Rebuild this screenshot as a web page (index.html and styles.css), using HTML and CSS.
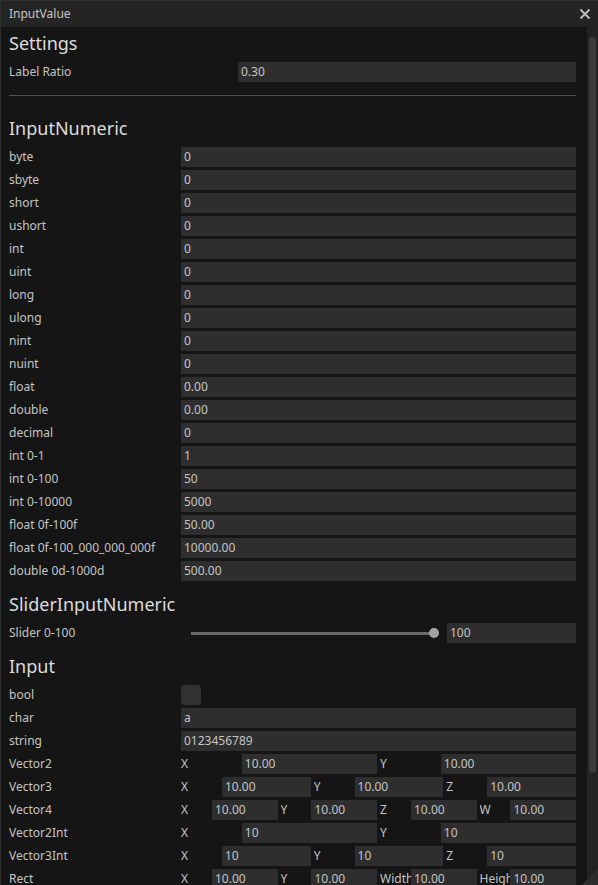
FILE: index.html
```html
<!DOCTYPE html>
<html>
<head>
<meta charset="utf-8">
<title>InputValue</title>
<link rel="stylesheet" href="styles.css">
</head>
<body>
<div class="window">
  <div class="titlebar">
    <span class="title">InputValue</span>
    <svg class="close" viewBox="0 0 12 12" width="12" height="12"><path d="M1.5 1.5 L10.5 10.5 M10.5 1.5 L1.5 10.5" stroke="#b8b8b8" stroke-width="2" fill="none"/></svg>
  </div>
  <div class="main">
    <div class="content">
      <div class="header">Settings</div>
      <div class="row"><div class="label wide">Label Ratio</div><div class="field">0.30</div></div>
      <div class="separator"></div>

      <div class="header">InputNumeric</div>
      <div class="row"><div class="label">byte</div><div class="field">0</div></div>
      <div class="row"><div class="label">sbyte</div><div class="field">0</div></div>
      <div class="row"><div class="label">short</div><div class="field">0</div></div>
      <div class="row"><div class="label">ushort</div><div class="field">0</div></div>
      <div class="row"><div class="label">int</div><div class="field">0</div></div>
      <div class="row"><div class="label">uint</div><div class="field">0</div></div>
      <div class="row"><div class="label">long</div><div class="field">0</div></div>
      <div class="row"><div class="label">ulong</div><div class="field">0</div></div>
      <div class="row"><div class="label">nint</div><div class="field">0</div></div>
      <div class="row"><div class="label">nuint</div><div class="field">0</div></div>
      <div class="row"><div class="label">float</div><div class="field">0.00</div></div>
      <div class="row"><div class="label">double</div><div class="field">0.00</div></div>
      <div class="row"><div class="label">decimal</div><div class="field">0</div></div>
      <div class="row"><div class="label">int 0-1</div><div class="field">1</div></div>
      <div class="row"><div class="label">int 0-100</div><div class="field">50</div></div>
      <div class="row"><div class="label">int 0-10000</div><div class="field">5000</div></div>
      <div class="row"><div class="label">float 0f-100f</div><div class="field">50.00</div></div>
      <div class="row"><div class="label">float 0f-100_000_000_000f</div><div class="field">10000.00</div></div>
      <div class="row"><div class="label">double 0d-1000d</div><div class="field">500.00</div></div>

      <div class="header">SliderInputNumeric</div>
      <div class="row">
        <div class="label">Slider 0-100</div>
        <div class="slider"><div class="track"></div><div class="knob"></div></div>
        <div class="field slider-field">100</div>
      </div>

      <div class="header">Input</div>
      <div class="row"><div class="label">bool</div><div class="checkbox"></div></div>
      <div class="row"><div class="label">char</div><div class="field">a</div></div>
      <div class="row"><div class="label">string</div><div class="field">0123456789</div></div>
      <div class="row"><div class="label">Vector2</div>
        <div class="comps">
          <div class="comp"><div class="clabel">X</div><div class="field">10.00</div></div>
          <div class="comp"><div class="clabel">Y</div><div class="field">10.00</div></div>
        </div>
      </div>
      <div class="row"><div class="label">Vector3</div>
        <div class="comps">
          <div class="comp"><div class="clabel">X</div><div class="field">10.00</div></div>
          <div class="comp"><div class="clabel">Y</div><div class="field">10.00</div></div>
          <div class="comp"><div class="clabel">Z</div><div class="field">10.00</div></div>
        </div>
      </div>
      <div class="row"><div class="label">Vector4</div>
        <div class="comps">
          <div class="comp"><div class="clabel">X</div><div class="field">10.00</div></div>
          <div class="comp"><div class="clabel">Y</div><div class="field">10.00</div></div>
          <div class="comp"><div class="clabel">Z</div><div class="field">10.00</div></div>
          <div class="comp"><div class="clabel">W</div><div class="field">10.00</div></div>
        </div>
      </div>
      <div class="row"><div class="label">Vector2Int</div>
        <div class="comps">
          <div class="comp"><div class="clabel">X</div><div class="field">10</div></div>
          <div class="comp"><div class="clabel">Y</div><div class="field">10</div></div>
        </div>
      </div>
      <div class="row"><div class="label">Vector3Int</div>
        <div class="comps">
          <div class="comp"><div class="clabel">X</div><div class="field">10</div></div>
          <div class="comp"><div class="clabel">Y</div><div class="field">10</div></div>
          <div class="comp"><div class="clabel">Z</div><div class="field">10</div></div>
        </div>
      </div>
      <div class="row"><div class="label">Rect</div>
        <div class="comps">
          <div class="comp"><div class="clabel">X</div><div class="field">10.00</div></div>
          <div class="comp"><div class="clabel">Y</div><div class="field">10.00</div></div>
          <div class="comp"><div class="clabel">Width</div><div class="field">10.00</div></div>
          <div class="comp"><div class="clabel">Height</div><div class="field">10.00</div></div>
        </div>
      </div>
    </div>
    <div class="scrollbar"><div class="thumb"></div></div>
  </div>
  <div class="resize"></div>
</div>
</body>
</html>
```

FILE: styles.css
```css
* { box-sizing: border-box; }
html, body { margin: 0; padding: 0; background: #151515; }
body {
  font-family: "Noto Sans", "Open Sans", sans-serif;
  font-size: 12px;
  color: #c4c4c4;
}
.window {
  width: 598px;
  height: 885px;
  border-left: 1px solid #2e2e2e;
  border-top: 1px solid #2e2e2e;
  background: #151515;
  display: flex;
  flex-direction: column;
  position: relative;
  overflow: hidden;
}
.titlebar {
  flex: none;
  height: 26px;
  background: #242424;
  display: flex;
  align-items: center;
  justify-content: space-between;
  padding: 0 7px 0 8px;
}
.title { line-height: 26px; color: #c4c4c4; }
.close { display: block; }
.main { flex: 1; display: flex; min-height: 0; }
.content {
  flex: 1;
  min-width: 0;
  padding: 0 11px 0 8px;
  overflow: hidden;
  display: flex;
  flex-direction: column;
}
.content > * { flex-shrink: 0; }
.header {
  height: 24px;
  line-height: 24px;
  font-size: 18px;
  color: #dcdcdc;
  margin-top: 8px;
  margin-bottom: 7px;
  white-space: nowrap;
}
.header:first-child { margin-top: 4px; }
.row {
  display: flex;
  align-items: center;
  height: 20px;
  margin-bottom: 3px;
}
.label {
  flex: none;
  width: 172px;
  line-height: 20px;
  white-space: nowrap;
  overflow: hidden;
}
.label.wide { width: 229px; }
.field {
  flex: 1;
  min-width: 0;
  height: 20px;
  line-height: 20px;
  background: #2e2e2e;
  padding-left: 3px;
  white-space: nowrap;
  overflow: hidden;
  color: #c4c4c4;
}
.separator {
  height: 1px;
  background: #505050;
  margin: 10px 0 12px;
}
.slider {
  flex: 1;
  display: flex;
  align-items: center;
  height: 20px;
  padding: 0 10px;
  margin-right: 3px;
}
.track { flex: 1; height: 3px; background: #6a6a6a; }
.knob {
  flex: none;
  width: 10px;
  height: 10px;
  border-radius: 50%;
  background: #a2a2a2;
  margin: 0 -5px;
}
.slider-field { flex: none; width: 129px; }
.checkbox {
  width: 20px;
  height: 20px;
  border-radius: 4px;
  background: #323232;
}
.comps { flex: 1; display: flex; gap: 3px; min-width: 0; }
.comp { flex: 1; display: flex; min-width: 0; }
.clabel {
  flex: none;
  width: calc(30% + 2px);
  line-height: 20px;
  white-space: nowrap;
  overflow: hidden;
}
.scrollbar {
  flex: none;
  width: 11px;
  background: #232323;
  padding: 10px 2px 0 2px;
}
.thumb {
  height: 736px;
  background: #3c3c3c;
  border-radius: 4px;
}
.resize {
  position: absolute;
  right: 0;
  bottom: 0;
  width: 17px;
  height: 17px;
  background: linear-gradient(to top left, #2c2c2c 50%, transparent 50%);
}
```
